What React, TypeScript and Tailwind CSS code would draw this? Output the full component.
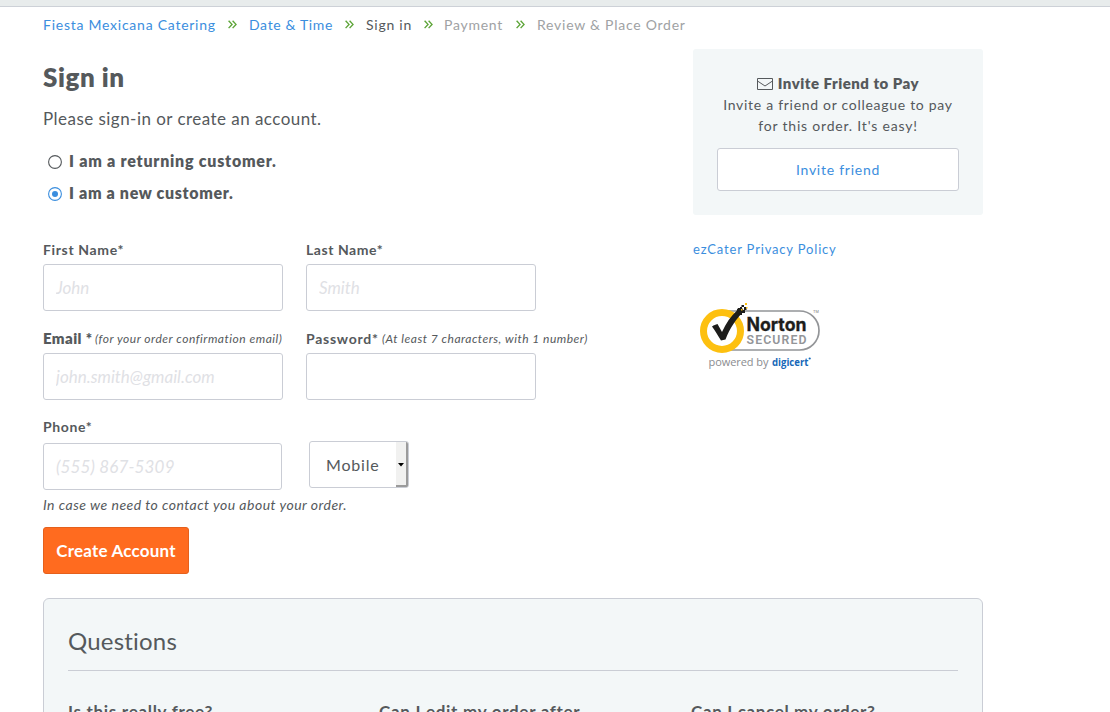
import type { ReactNode } from "react";

function Crumb({ children, className }: { children: ReactNode; className: string }) {
  return <span className={`whitespace-nowrap ${className}`}>{children}</span>;
}

function Chevrons({ className }: { className: string }) {
  return (
    <svg className={`mt-px ${className}`} width="9" height="9" viewBox="0 0 9 9" fill="none" stroke="#5ea539" strokeWidth="1.4">
      <path d="M0.6 0.7 4 4.4 0.6 8.1M4.6 0.7 8 4.4 4.6 8.1" />
    </svg>
  );
}

function Radio({ label, checked, className }: { label: string; checked?: boolean; className: string }) {
  return (
    <label className="flex h-8 items-center pl-[5px]">
      <svg width="14" height="14" viewBox="0 0 14 14" className="mt-[2px] mr-[7px] shrink-0">
        <circle cx="7" cy="7" r="6.4" fill="#fff" stroke={checked ? "#3b8ede" : "#55595c"} strokeWidth="1.1" />
        {checked && <circle cx="7" cy="7" r="3" fill="#3b8ede" />}
      </svg>
      <span className={`whitespace-nowrap text-[16px] font-extrabold ${className}`}>{label}</span>
    </label>
  );
}

function Field({
  label,
  labelClass = "text-[14px] font-bold tracking-[0.65px]",
  hint,
  hintClass = "",
  placeholder,
  type = "text",
  width,
}: {
  label: string;
  labelClass?: string;
  hint?: string;
  hintClass?: string;
  placeholder?: string;
  type?: string;
  width: string;
}) {
  return (
    <label className="block">
      <span className="flex h-7 items-center whitespace-nowrap">
        <span className={`shrink-0 pb-[2px] ${labelClass}`}>{label}</span>
        {hint && <span className={`text-[12px] italic ${hintClass}`}>{hint}</span>}
      </span>
      <input
        type={type}
        placeholder={placeholder}
        className={`block h-[47px] rounded-[3px] border border-[#cacdd5] bg-white px-3 text-[17px] outline-none placeholder:italic placeholder:text-[#dfe1e5] ${width}`}
      />
    </label>
  );
}

function NortonSeal() {
  return (
    <svg width="126" height="70" viewBox="0 0 126 70" className="block">
      <path d="M22 10H99.500A19.500 19.500 0 0 1 99.500 49H22" fill="#fff" stroke="#939598" strokeWidth="1.7" />
      <circle cx="22" cy="30" r="18.500" fill="#fff" stroke="#fdc010" strokeWidth="7" />
      <path d="M12 25.500C14 24 15.500 23.500 17.500 23L22 31C26 22 31 15 36.500 10L38 7H42L44 10C36 18 30 27 25.500 38.500L21 39.500C18 35 15.500 30 12 25.500Z" fill="#1d1d1b" />
      <path d="M37 8h3v-2h2v3h3v3h-3v2h-3zM41.500 4h2.500v2h-2.500zM44 6h2.500v3h-2.500z" fill="#1d1d1b" />
      <path d="M45 2h2v2h-2zM41 8h1.500v1.500h-1.500zM46 6h1.500v1.500h-1.500z" fill="#fdc010" />
      <text x="46.500" y="29.500" textLength="60" lengthAdjust="spacingAndGlyphs" fontFamily="Inter, sans-serif" fontWeight="700" fontSize="18.500" fill="#1d1d1b" stroke="#1d1d1b" strokeWidth="0.3">Norton</text>
      <text x="46.500" y="42.700" textLength="60" fontFamily="Roboto, sans-serif" fontWeight="600" fontSize="12.300" fill="#939598">SECURED</text>
      <text x="113" y="12" fontFamily="'Liberation Sans', sans-serif" fontSize="4" fill="#777">TM</text>
      <text x="8.500" y="65" textLength="60" fontFamily="'Open Sans', sans-serif" fontSize="11" fontWeight="500" fill="#8a8c8f">powered by</text>
      <text x="72" y="65" textLength="36.500" lengthAdjust="spacingAndGlyphs" fontFamily="'Open Sans', sans-serif" fontWeight="700" fontSize="11" fill="#1668b8">digicert</text>
      <circle cx="109.700" cy="57.500" r="1.100" fill="#1668b8" />
    </svg>
  );
}

export default function App() {
  return (
    <div className="h-[712px] w-[1110px] overflow-hidden bg-white font-['Lato',sans-serif] text-[#55595c]">
      <div className="h-[7px] border-b border-[#cdd1d7] bg-[#e8ecec]" />
      <div className="ml-[43px] w-[940px]">
        <nav className="mb-[2px] flex h-[34px] items-center text-[14px] tracking-[0.75px]">
          <Crumb className="w-[173px] text-[#3b8ede]">Fiesta Mexicana Catering</Crumb>
          <Chevrons className="mr-3 ml-3" />
          <Crumb className="w-[84px] tracking-[0.65px] text-[#3b8ede]">Date &amp; Time</Crumb>
          <Chevrons className="mr-3 ml-3" />
          <Crumb className="w-[46px]">Sign in</Crumb>
          <Chevrons className="mr-[11px] ml-3" />
          <Crumb className="w-[60px] text-[#a0a2a4]">Payment</Crumb>
          <Chevrons className="mr-3 ml-3" />
          <Crumb className="text-[#a0a2a4]">Review &amp; Place Order</Crumb>
        </nav>

        <div className="flex justify-between">
          <main className="w-[560px]">
            <h1 className="mt-[5px] mb-[1px] flex h-[58px] items-center text-[26px] font-extrabold tracking-[0.55px]">Sign in</h1>
            <p className="h-6 text-[17px] leading-6 tracking-[0.46px]">Please sign-in or create an account.</p>
            <div className="mt-[14px]">
              <Radio label="I am a returning customer." className="tracking-[0.76px]" />
              <Radio label="I am a new customer." checked className="tracking-[0.66px]" />
            </div>

            <div className="mt-[27px] flex gap-[23px]">
              <Field label="First Name*" placeholder="John" width="w-[240px]" />
              <Field label="Last Name*" labelClass="text-[14px] font-bold tracking-[0.55px]" placeholder="Smith" width="w-[230px]" />
            </div>
            <div className="mt-[14px] flex gap-[23px]">
              <div className="w-[240px]">
                <Field
                  label="Email *"
                  labelClass="w-[52px] text-[15px] font-extrabold tracking-[0.4px]"
                  hint="(for your order confirmation email)"
                  hintClass="tracking-[0.51px]"
                  placeholder="john.smith@gmail.com"
                  width="w-[240px]"
                />
              </div>
              <div className="w-[230px]">
                <Field
                  label="Password*"
                  labelClass="w-[76px] text-[14px] font-bold tracking-[0.75px]"
                  hint="(At least 7 characters, with 1 number)"
                  hintClass="tracking-[0.5px]"
                  type="password"
                  width="w-[230px]"
                />
              </div>
            </div>
            <div className="mt-[14px] flex items-end gap-[27px]">
              <div>
                <div className="mt-[-1px] flex h-[30px] items-start pt-[5px] text-[14px] leading-[18px] font-bold tracking-[0.6px]">Phone*</div>
                <input
                  aria-label="Phone"
                  placeholder="(555) 867-5309"
                  className="block h-[47px] w-[239px] rounded-[3px] border border-[#cacdd5] bg-white px-3 text-[17px] tracking-[0.15px] outline-none placeholder:italic placeholder:text-[#dfe1e5]"
                />
              </div>
              <button className="mb-[2px] flex h-[47px] w-[100px] items-stretch overflow-hidden rounded-[3px] border border-[#cacdd5] bg-white text-left">
                <span className="flex w-[86px] items-center pl-4 text-[16px] tracking-[0.8px]">Mobile</span>
                <span className="flex w-3 items-center justify-center border-r-2 border-b-2 border-[#9b9b9b] bg-[#f1f1f0]">
                  <svg width="6" height="4" viewBox="0 0 6 4" className="mt-[2px]">
                    <path d="M0 0h6L3 3.500Z" fill="#000" />
                  </svg>
                </span>
              </button>
            </div>
            <p className="mt-[3px] h-6 text-[14px] leading-6 italic tracking-[0.48px]">In case we need to contact you about your order.</p>
            <button className="mt-[10px] block h-[47px] w-[146px] rounded-[3px] border border-[#e5601c] bg-[#ff6b1f] text-center text-[17px] font-bold tracking-[0.2px] whitespace-nowrap text-white">
              Create Account
            </button>
          </main>

          <aside className="w-[290px]">
            <section className="mt-[6px] h-[166px] rounded-[3px] bg-[#f3f7f8] px-6 pt-6 text-center text-[14px] leading-[21px]">
              <h2 className="flex items-center justify-center gap-[5px] text-[15px] font-extrabold tracking-[0.5px]">
                <svg width="16" height="12" viewBox="0 0 16 12" fill="none" stroke="#55595c">
                  <path d="M.5.5h15v11H.5ZM.5 3 8 8l7.500-5" />
                </svg>
                Invite Friend to Pay
              </h2>
              <p className="tracking-[0.71px]">
                Invite a friend or colleague to pay
                <br />
                <span className="tracking-[0.8px]">for this order. It&apos;s easy!</span>
              </p>
              <button className="mt-3 h-[43px] w-[242px] rounded-[3px] border border-[#cacdd5] bg-white text-[14px] tracking-[0.75px] text-[#3b8ede]">
                Invite friend
              </button>
            </section>
            <a className="mt-6 block h-[21px] text-[13px] leading-[21px] tracking-[0.83px] text-[#3b8ede]">ezCater Privacy Policy</a>
            <div className="mt-[41px] pl-[7px]">
              <NortonSeal />
            </div>
          </aside>
        </div>

        <section className="mt-6 h-[180px] rounded-[6px] border border-[#cacdd5] bg-[#f3f7f8] px-6">
          <h2 className="flex h-[72px] items-center border-b border-[#cacdd5] pt-[13px] text-[24px] tracking-[0.2px]">Questions</h2>
          <div className="mt-[29px] flex text-[17px] leading-6 font-bold whitespace-nowrap">
            <h3 className="w-[311px] tracking-[0.7px]">Is this really free?</h3>
            <h3 className="w-[312px] tracking-[0.7px]">Can I edit my order after</h3>
            <h3 className="tracking-[0.65px]">Can I cancel my order?</h3>
          </div>
        </section>
      </div>
    </div>
  );
}
